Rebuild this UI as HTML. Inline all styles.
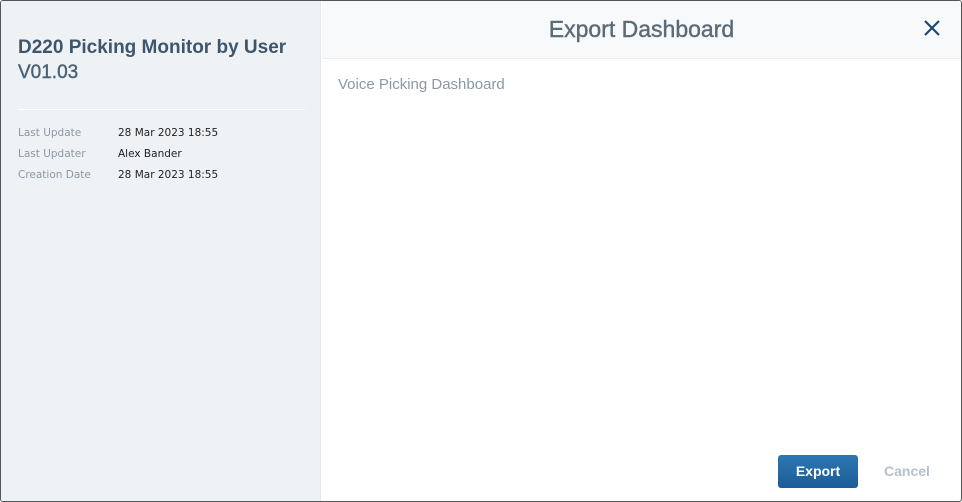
<!DOCTYPE html>
<html><head><style>
*{margin:0;padding:0;box-sizing:border-box}
body{width:962px;height:502px;overflow:hidden;background:#fff;font-family:"Liberation Sans",sans-serif;position:relative}
.frame{position:absolute;left:0;top:0;width:962px;height:502px;border:1px solid #555;border-radius:3px;overflow:hidden}
.left{position:absolute;left:0;top:0;width:320px;height:502px;background:#eff2f5;border-right:1px solid #e3e7eb}
.t1{position:absolute;left:17px;top:36px;font-size:19px;font-weight:bold;color:#3e566d;white-space:nowrap}
.t2{position:absolute;left:17px;top:61px;font-size:19px;color:#4a6275;-webkit-text-stroke:0.4px #4a6275}
.hr{position:absolute;left:17px;top:108px;width:287px;height:1px;background:#fff}
.row{position:absolute;left:17px;font-family:"DejaVu Sans",sans-serif;font-size:10.5px;color:#8a98a5}
.row span{position:absolute;left:100px;color:#222;white-space:nowrap}
.head{position:absolute;left:321px;top:0;right:0;height:58px;background:#f8f9fa;border-bottom:1px solid #eceef0}
.title{position:absolute;left:0;right:0;top:15px;text-align:center;font-size:23px;color:#5a6b78;-webkit-text-stroke:0.4px #5a6b78}
.x{position:absolute;right:20px;top:18px}
.sub{position:absolute;left:337px;top:75px;font-size:15px;color:#8a98a5}
.btn{position:absolute;left:777px;top:454px;width:80px;height:33px;border-radius:3px;background:linear-gradient(#2d77b3,#1c5d95);color:#fff;font-weight:bold;font-size:14px;text-align:center;line-height:33px}
.cancel{position:absolute;left:883px;top:462px;font-size:14px;font-weight:bold;color:#b5c2ce}
</style></head><body>
<div class="frame">
<div class="left">
<div class="t1">D220 Picking Monitor by User</div>
<div class="t2">V01.03</div>
<div class="hr"></div>
<div class="row" style="top:126px">Last Update<span>28 Mar 2023 18:55</span></div>
<div class="row" style="top:147px">Last Updater<span>Alex Bander</span></div>
<div class="row" style="top:168px">Creation Date<span>28 Mar 2023 18:55</span></div>
</div>
<div class="head"><div class="title">Export Dashboard</div>
<svg class="x" width="18" height="18" viewBox="0 0 18 18"><path d="M2 2L16 16M16 2L2 16" stroke="#1e4a6e" stroke-width="2.2"/></svg></div>
<div class="sub">Voice Picking Dashboard</div>
<div class="btn">Export</div>
<div class="cancel">Cancel</div>
</div>
</body></html>
